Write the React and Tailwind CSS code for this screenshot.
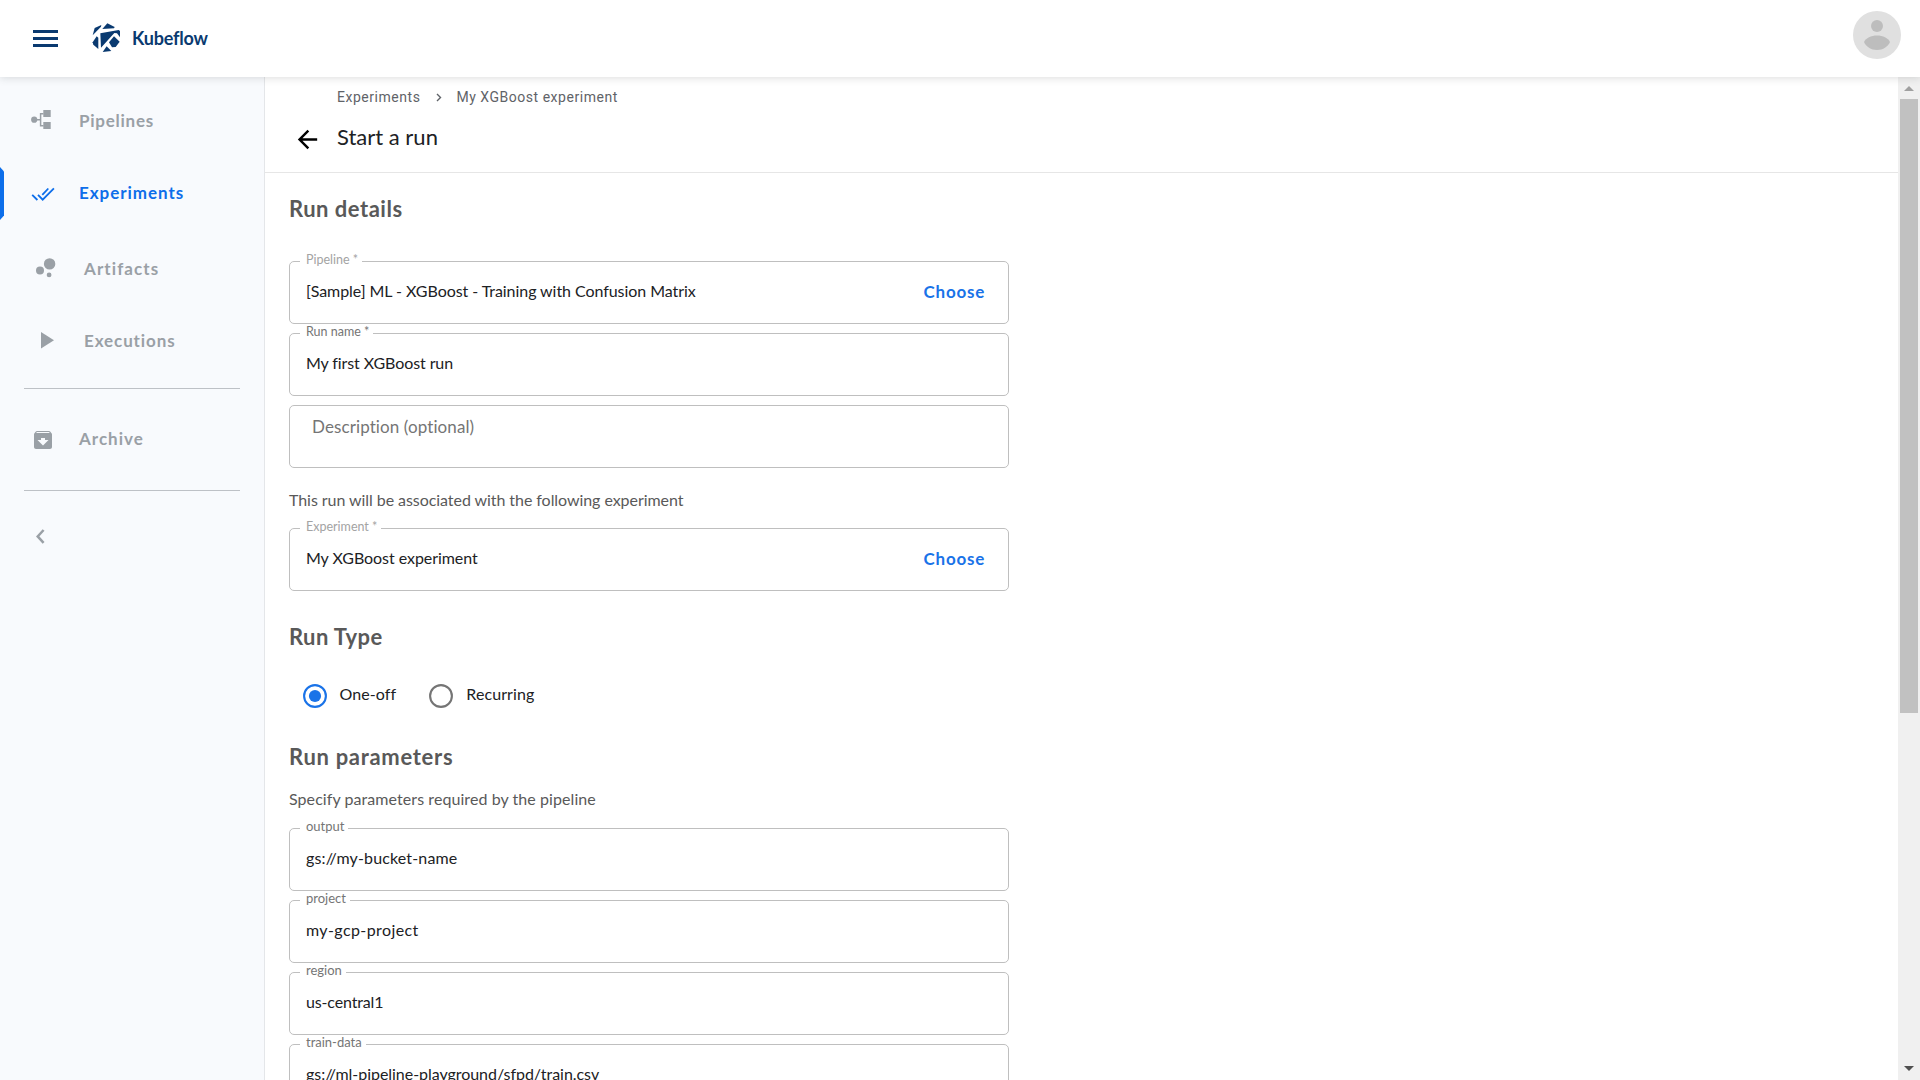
import React, { useState } from "react";
import clsx from "clsx";

const KubeflowLogo = () => (
  <svg width="29" height="30" viewBox="275 68 87 90" fill="#0a3a70">
    <path d="M277 105L283 83L303 74L302 79Z" />
    <path d="M306 86L321 69L343 80L341 84Z" />
    <path d="M300 99L355 89L359 92L359 111L350 99L342 98L302 142Z" />
    <path d="M326 126L341 108L358 124L346 140L335 141Z" />
    <path d="M277 126L289 108L294 112L294 146L279 133Z" />
    <path d="M307 155L319 138L333 152Z" />
  </svg>
);

const PipelinesIcon = () => (
  <svg width="20" height="20" viewBox="0 0 20 20" fill="currentColor">
    <circle cx="3.2" cy="9.7" r="3.1" />
    <rect x="12.3" y="0" width="7.4" height="7" />
    <rect x="12.3" y="12" width="7.4" height="7" />
    <path d="M5 9.7h5M12.5 3.8H9.6v12h3" fill="none" stroke="currentColor" strokeWidth="1.5" />
  </svg>
);

const ExperimentsIcon = () => (
  <svg width="24" height="15" viewBox="0 0 24 15" fill="none" stroke="currentColor" strokeWidth="1.8">
    <path d="M1.2 7.800l5.200 5.200M7 7.800l4.700 4.900L22.900 1.400M11.300 7.900l6-6.400" />
  </svg>
);

const ArtifactsIcon = () => (
  <svg width="20" height="20" viewBox="0 0 20 20" fill="currentColor">
    <circle cx="4" cy="12.5" r="4" />
    <circle cx="13.6" cy="5.9" r="5.7" />
    <circle cx="13.1" cy="16.9" r="2.4" />
  </svg>
);

const ExecutionsIcon = () => (
  <svg width="13" height="17" viewBox="0 0 13 17" fill="currentColor">
    <path d="M0 0v16.600l13-8.300z" />
  </svg>
);

const ArchiveIcon = () => (
  <svg width="24" height="24" viewBox="0 0 24 24" fill="currentColor">
    <path d="M20.54 5.23l-1.39-1.68C18.88 3.21 18.47 3 18 3H6c-.47 0-.88.21-1.16.55L3.46 5.23C3.17 5.57 3 6.02 3 6.5V19c0 1.1.9 2 2 2h14c1.1 0 2-.9 2-2V6.5c0-.48-.17-.93-.46-1.27zM12 17.5L6.5 12H10v-2h4v2h3.5L12 17.5zM5.12 5l.81-1h12l.94 1H5.12z" />
  </svg>
);

const NavItem = ({ icon, label, active, iconClass, labelClass }) => (
  <a
    className={clsx(
      "relative flex h-[72px] items-center pb-px text-[17px] font-bold",
      active ? "text-[#0d6eea]" : "text-[#9aa0a6]"
    )}
  >
    {active && (
      <svg className="absolute left-0 top-[10px]" width="4" height="53" viewBox="0 0 4 53" fill="currentColor">
        <path d="M0 0l4 4.500v44L0 53z" />
      </svg>
    )}
    <span className={clsx("flex shrink-0", iconClass)}>{icon}</span>
    <span className={labelClass}>{label}</span>
  </a>
);

const Field = ({ label, value, required, disabled, onChoose }) => (
  <div className="relative mb-[9px] flex h-[63px] items-center justify-between rounded-[5px] border border-[#bfbfbf] pb-[3px] pl-4 pr-[23px]">
    {/* Label sits in the notch of the outline */}
    <label
      className={clsx(
        "absolute left-[10px] bg-white pl-1.5 pr-1 leading-[14px]",
        required ? "-top-[9px] text-[12.5px]" : "-top-[10px] text-[13px]",
        disabled ? "text-[#a3a3a3]" : "text-[#757575]"
      )}
    >
      {label}
      {required && " *"}
    </label>
    <span className="whitespace-nowrap text-[#202124]">{value}</span>
    {onChoose && (
      <button className="mt-[2px] text-[17px] font-bold tracking-[0.75px] text-[#1a73e8]">Choose</button>
    )}
  </div>
);

const Radio = ({ label, checked, onChange, className }) => (
  <label className={clsx("flex items-center", className)} onClick={onChange}>
    <svg width="24" height="24" viewBox="0 0 24 24" fill="none">
      <circle cx="12" cy="12" r="10.9" stroke={checked ? "#1a73e8" : "#757575"} strokeWidth="2.1" />
      {checked && <circle cx="12" cy="12" r="6.1" fill="#1a73e8" />}
    </svg>
    <span className="ml-[13px] pb-1 tracking-[0.1px] text-[#202124]">{label}</span>
  </label>
);

const parameters = [
  { name: "output", value: <span className="tracking-[0.15px]">gs://my-bucket-name</span> },
  { name: "project", value: <span className="tracking-[0.4px]">my-gcp-project</span> },
  { name: "region", value: <span className="tracking-[-0.15px]">us-central1</span> },
  { name: "train-data", value: <span className="tracking-[-0.04px]">gs://ml-pipeline-playground/sfpd/train.csv</span> },
];

const App = () => {
  const [recurring, setRecurring] = useState(false);

  return (
    <div className="flex h-screen flex-col overflow-hidden bg-white font-['Lato','Liberation_Sans',sans-serif] text-base">
      {/* Header */}
      <header className="relative z-10 flex h-[77px] shrink-0 items-center bg-white pl-[33px] pr-[19px] shadow-[0_1px_8px_rgba(60,64,67,0.18)]">
        <button className="flex flex-col gap-1">
          <span className="h-[3px] w-[25px] bg-[#0a3a70]" />
          <span className="h-[3px] w-[25px] bg-[#0a3a70]" />
          <span className="h-[3px] w-[25px] bg-[#0a3a70]" />
        </button>
        <div className="mb-px ml-[34px] flex items-center">
          <KubeflowLogo />
          <span className="ml-[11px] text-[18px] font-bold tracking-[-0.2px] text-[#0a3a70]">Kubeflow</span>
        </div>
        <svg className="mb-[7px] ml-auto" width="48" height="48" viewBox="0 0 48 48">
          <circle cx="24" cy="24" r="24" fill="#e0e0e0" />
          <circle cx="24" cy="15" r="6" fill="#bdbdbd" />
          <path d="M11 31c2-4 7-6.500 13-6.500S35 27 37 31c-2 4.500-7 8-13 8s-11-3.500-13-8z" fill="#bdbdbd" />
        </svg>
      </header>

      <div className="flex min-h-0 flex-1">
        {/* Side navigation */}
        <nav className="w-[265px] shrink-0 border-r border-[#e4e6e9] bg-[#f8fafd] pt-2">
          <NavItem icon={<PipelinesIcon />} label="Pipelines" iconClass="w-12 ml-[31px] mb-px" labelClass="tracking-[0.75px]" />
          <NavItem icon={<ExperimentsIcon />} label="Experiments" active iconClass="w-12 ml-[31px] mt-[3px]" labelClass="tracking-[0.95px]" />
          <div className="h-1" />
          <NavItem icon={<ArtifactsIcon />} label="Artifacts" iconClass="w-12 ml-9 mb-px" labelClass="tracking-[1.1px]" />
          <NavItem icon={<ExecutionsIcon />} label="Executions" iconClass="w-[43px] ml-[41px] mb-px" labelClass="tracking-[0.9px]" />
          <hr className="mx-6 mt-[11px] border-[#bdc1c6]" />
          <div className="h-[14px]" />
          <NavItem icon={<ArchiveIcon />} label="Archive" iconClass="w-12 ml-[31px] mt-[3px]" labelClass="tracking-[1px]" />
          <hr className="mx-6 mt-[15px] border-[#bdc1c6]" />
          <button className="ml-9 mt-[38px] block text-[#9aa0a6]">
            <svg width="9" height="15" viewBox="0 0 9 15" fill="none" stroke="currentColor" strokeWidth="2.5">
              <path d="M7.600 1L1.700 7.400l5.900 6.400" />
            </svg>
          </button>
        </nav>

        {/* Page */}
        <main className="min-w-0 flex-1 overflow-hidden">
          <div className="h-24 border-b border-[#e6e6e6] pt-3">
            <div className="ml-[72px] flex h-4 items-center font-['Roboto',sans-serif] text-sm leading-4 tracking-[0.53px] text-[#5f6368]">
              <span>Experiments</span>
              <svg className="ml-4" width="6" height="9" viewBox="0 0 6 9" fill="none" stroke="currentColor" strokeWidth="1.4">
                <path d="M1 1l3.500 3.500L1 8" />
              </svg>
              <span className="ml-[14px]">My XGBoost experiment</span>
            </div>
            <div className="mt-5 flex h-[29px] items-center">
              <svg className="ml-7" width="29" height="29" viewBox="0 0 24 24" fill="#000">
                <path d="M20 11H7.830l5.590-5.590L12 4l-8 8 8 8 1.410-1.410L7.830 13H20v-2z" />
              </svg>
              <h1 className="mb-[5px] ml-[15px] text-[22px] leading-7 text-[#202124]">Start a run</h1>
            </div>
          </div>

          <div className="w-[744px] pl-6 pt-[22px]">
            <h2 className="text-[22px] font-bold leading-7 tracking-[0.5px] text-[#595959]">Run details</h2>
            <div className="mt-[38px]">
              <Field
                label="Pipeline"
                required
                disabled
                onChoose
                value={<span className="tracking-[-0.06px]">[Sample] ML - XGBoost - Training with Confusion Matrix</span>}
              />
              <Field label="Run name" required value={<span className="tracking-[-0.1px]">My first XGBoost run</span>} />
              <div className="h-[63px] rounded-[5px] border border-[#bfbfbf] pl-[22px] pt-[9px] text-[17px] leading-6 tracking-[0.1px] text-[#757575]">
                Description (optional)
              </div>
            </div>

            <p className="mb-4 mt-5 tracking-[-0.06px] text-[#595959]">
              This run will be associated with the following experiment
            </p>
            <Field
              label="Experiment"
              required
              disabled
              onChoose
              value={<span className="tracking-[-0.06px]">My XGBoost experiment</span>}
            />

            <h2 className="mt-8 text-[22px] font-bold leading-7 tracking-[0.4px] text-[#595959]">Run Type</h2>
            <div className="mt-[33px] flex h-6 pl-[13.5px]">
              <Radio label="One-off" checked={!recurring} onChange={() => setRecurring(false)} />
              <Radio label="Recurring" checked={recurring} onChange={() => setRecurring(true)} className="ml-[33px]" />
            </div>

            <h2 className="mt-[35px] text-[22px] font-bold leading-7 tracking-[0.7px] text-[#595959]">Run parameters</h2>
            <p className="mb-[17px] mt-4 tracking-[0.07px] text-[#595959]">Specify parameters required by the pipeline</p>
            {parameters.map((param) => (
              <Field key={param.name} label={param.name} value={param.value} />
            ))}
          </div>
        </main>

        {/* Scrollbar */}
        <div className="flex w-[22px] shrink-0 flex-col items-center bg-[#f0f0f0] pb-[9px] pt-[9px]">
          <svg width="10" height="5" viewBox="0 0 10 5" fill="#a0a0a0">
            <path d="M5 0l5 5H0z" />
          </svg>
          <div className="mt-2 h-[614px] w-[18px] bg-[#c1c1c1]" />
          <svg className="mt-auto" width="10" height="5" viewBox="0 0 10 5" fill="#505050">
            <path d="M0 0h10L5 5z" />
          </svg>
        </div>
      </div>
    </div>
  );
};

export default App;
